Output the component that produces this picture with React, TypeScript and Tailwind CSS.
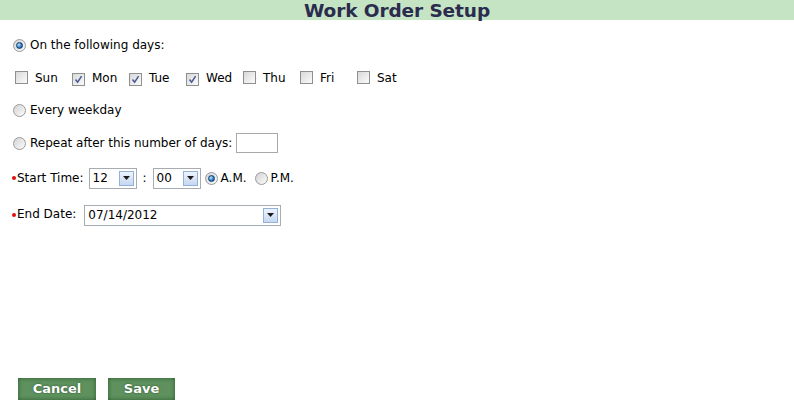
function Radio({ on }: { on?: boolean }) {
  return (
    <span className="inline-flex w-[13px] h-[13px] shrink-0 items-center justify-center rounded-full border border-[#9a9a9a] bg-gradient-to-br from-[#d4d4d4] to-[#fbfbfb]">
      {on && (
        <span className="w-[7px] h-[7px] rounded-full border border-[#0d3d70] bg-[radial-gradient(circle_at_35%_35%,#bfe6ff,#2b78c0_60%,#0f4a88)]" />
      )}
    </span>
  );
}

function Check({ on }: { on?: boolean }) {
  return (
    <span className="inline-flex w-[13px] h-[13px] shrink-0 items-center justify-center border border-[#8e8f8f] bg-gradient-to-br from-[#d9d9d9] to-[#fbfbfb]">
      {on && (
        <svg width="9" height="9" viewBox="0 0 9 9">
          <path d="M1.5 4.5 L3.6 7.2 L7.6 1.2" stroke="#4a5894" strokeWidth="1.5" fill="none" />
        </svg>
      )}
    </span>
  );
}

function Arrow() {
  return (
    <span className="inline-flex w-[15px] h-[15px] items-center justify-center border border-[#93b0da] bg-gradient-to-b from-[#eef4fd] to-[#c5d7f1]">
      <svg width="7" height="4" viewBox="0 0 7 4">
        <path d="M0 0 H7 L3.5 4 Z" fill="#1a1a1a" />
      </svg>
    </span>
  );
}

function Select({ value, width }: { value: string; width: string }) {
  return (
    <span className={`inline-flex h-[21px] items-center justify-between border border-[#a5acb2] bg-white pl-[3px] pr-[2px] ${width}`}>
      <span>{value}</span>
      <Arrow />
    </span>
  );
}

function Bullet() {
  return <span className="w-[4px] h-[4px] rounded-full bg-[#e01010] mr-[1px]" />;
}

export default function App() {
  const days = [
    { d: "Sun", on: false },
    { d: "Mon", on: true },
    { d: "Tue", on: true },
    { d: "Wed", on: true },
    { d: "Thu", on: false },
    { d: "Fri", on: false },
    { d: "Sat", on: false },
  ];

  return (
    <div className="h-[406px] w-[794px] flex flex-col bg-white text-[12px] text-black font-['DejaVu_Sans',sans-serif] overflow-hidden">
      <div className="h-[20px] bg-[#c4e4c4] text-center text-[18.5px] font-bold leading-[22px] tracking-[-0.1px] text-[#2b2b4e]">
        Work Order Setup
      </div>

      <div className="pl-[13px] pt-[18px]">
        <div className="flex items-center gap-[4px] h-[14px]">
          <Radio on />
          <span>On the following days:</span>
        </div>

        <div className="flex items-center mt-[19px] pl-[2px] h-[14px]">
          {days.map((x) => (
            <div key={x.d} className="flex items-center gap-[7px] w-[57px]">
              <span className="mt-[3px]">
                <Check on={x.on} />
              </span>
              <span>{x.d}</span>
            </div>
          ))}
        </div>

        <div className="flex items-center gap-[4px] h-[14px] mt-[18px]">
          <Radio />
          <span>Every weekday</span>
        </div>

        <div className="flex items-center gap-[4px] h-[20px] mt-[16px]">
          <Radio />
          <span>Repeat after this number of days:</span>
          <span className="w-[42px] h-[20px] border border-[#a8a8a8] bg-white ml-[0px]" />
        </div>

        <div className="flex items-center h-[22px] mt-[14px] -ml-[1px]">
          <Bullet />
          <span>Start Time:</span>
          <span className="ml-[5px]">
            <Select value="12" width="w-[48px]" />
          </span>
          <span className="mx-[6px]">:</span>
          <Select value="00" width="w-[48px]" />
          <span className="ml-[4px] flex items-center gap-[3px]">
            <Radio on />
            <span>A.M.</span>
          </span>
          <span className="ml-[8px] flex items-center gap-[3px]">
            <Radio />
            <span>P.M.</span>
          </span>
        </div>

        <div className="flex items-center h-[22px] mt-[15px] -ml-[1px]">
          <Bullet />
          <span className="-mt-[3px]">End Date:</span>
          <span className="ml-[8px]">
            <Select value="07/14/2012" width="w-[197px]" />
          </span>
        </div>
      </div>

      <div className="mt-auto mb-[6px] ml-[18px] flex gap-[12px]">
        <button className="w-[78px] h-[22px] bg-[#5e915e] shadow-[inset_0_0_4px_#2e5a2e] text-white font-bold text-[13px] [text-shadow:0_0_2px_#2a4a2a]">
          Cancel
        </button>
        <button className="w-[67px] h-[22px] bg-[#5e915e] shadow-[inset_0_0_4px_#2e5a2e] text-white font-bold text-[13px] [text-shadow:0_0_2px_#2a4a2a]">
          Save
        </button>
      </div>
    </div>
  );
}
